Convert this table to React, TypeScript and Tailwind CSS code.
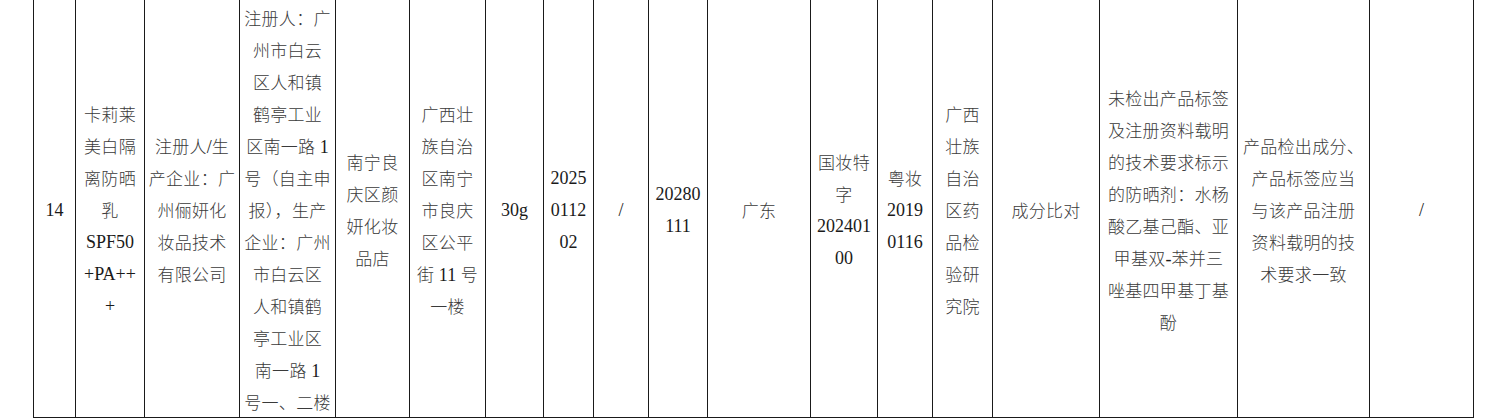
import React from "react";

type Col = { w: string; lines: string[] };

const cols: Col[] = [
  { w: "w-[42px]", lines: ["14"] },
  { w: "w-[69px]", lines: ["卡莉莱", "美白隔", "离防晒", "乳", "SPF50", "+PA++", "+"] },
  { w: "w-[95px]", lines: ["注册人/生", "产企业：广", "州俪妍化", "妆品技术", "有限公司"] },
  {
    w: "w-[96px]",
    lines: [
      "注册人：广",
      "州市白云",
      "区人和镇",
      "鹤亭工业",
      "区南一路 1",
      "号（自主申",
      "报），生产",
      "企业：广州",
      "市白云区",
      "人和镇鹤",
      "亭工业区",
      "南一路 1",
      "号一、二楼",
    ],
  },
  { w: "w-[74px]", lines: ["南宁良", "庆区颜", "妍化妆", "品店"] },
  { w: "w-[76px]", lines: ["广西壮", "族自治", "区南宁", "市良庆", "区公平", "街 11 号", "一楼"] },
  { w: "w-[58px]", lines: ["30g"] },
  { w: "w-[50px]", lines: ["2025", "0112", "02"] },
  { w: "w-[55px]", lines: ["/"] },
  { w: "w-[59px]", lines: ["20280", "111"] },
  { w: "w-[103px]", lines: ["广东"] },
  { w: "w-[67px]", lines: ["国妆特", "字", "202401", "00"] },
  { w: "w-[55px]", lines: ["粤妆", "2019", "0116"] },
  { w: "w-[60px]", lines: ["广西", "壮族", "自治", "区药", "品检", "验研", "究院"] },
  { w: "w-[107px]", lines: ["成分比对"] },
  {
    w: "w-[138px]",
    lines: [
      "未检出产品标签",
      "及注册资料载明",
      "的技术要求标示",
      "的防晒剂：水杨",
      "酸乙基己酯、亚",
      "甲基双-苯并三",
      "唑基四甲基丁基",
      "酚",
    ],
  },
  {
    w: "w-[132px]",
    lines: ["产品检出成分、", "产品标签应当", "与该产品注册", "资料载明的技", "术要求一致"],
  },
  { w: "w-[105px] border-r", lines: ["/"] },
];

function Line({ t }: { t: string }) {
  const parts = t.split(/([\x20-\x7E]+)/).filter((p) => p.length > 0);
  return (
    <div className="h-[32px] leading-[32px] whitespace-nowrap">
      {parts.map((p, i) =>
        /^[\x20-\x7E]+$/.test(p) ? (
          <span
            key={i}
            className="font-['Liberation_Serif',serif] text-[18px] text-[#1a1a1a] tracking-normal whitespace-pre"
          >
            {p}
          </span>
        ) : (
          <span
            key={i}
            className="font-['Noto_Sans_CJK_SC',sans-serif] text-[17px] font-light text-[#3a3a3a] tracking-[0.3px]"
          >
            {p}
          </span>
        )
      )}
    </div>
  );
}

export default function App() {
  return (
    <div className="w-[1487px] h-[420px] bg-white overflow-hidden">
      <div className="flex h-[418px] ml-[33px]">
        {cols.map((c, i) => (
          <div
            key={i}
            className={`${c.w} shrink-0 h-full border-l border-b border-[#1a1a1a] pt-[2px] flex flex-col items-center justify-center text-center`}
          >
            {c.lines.map((l, j) => (
              <Line key={j} t={l} />
            ))}
          </div>
        ))}
      </div>
    </div>
  );
}
